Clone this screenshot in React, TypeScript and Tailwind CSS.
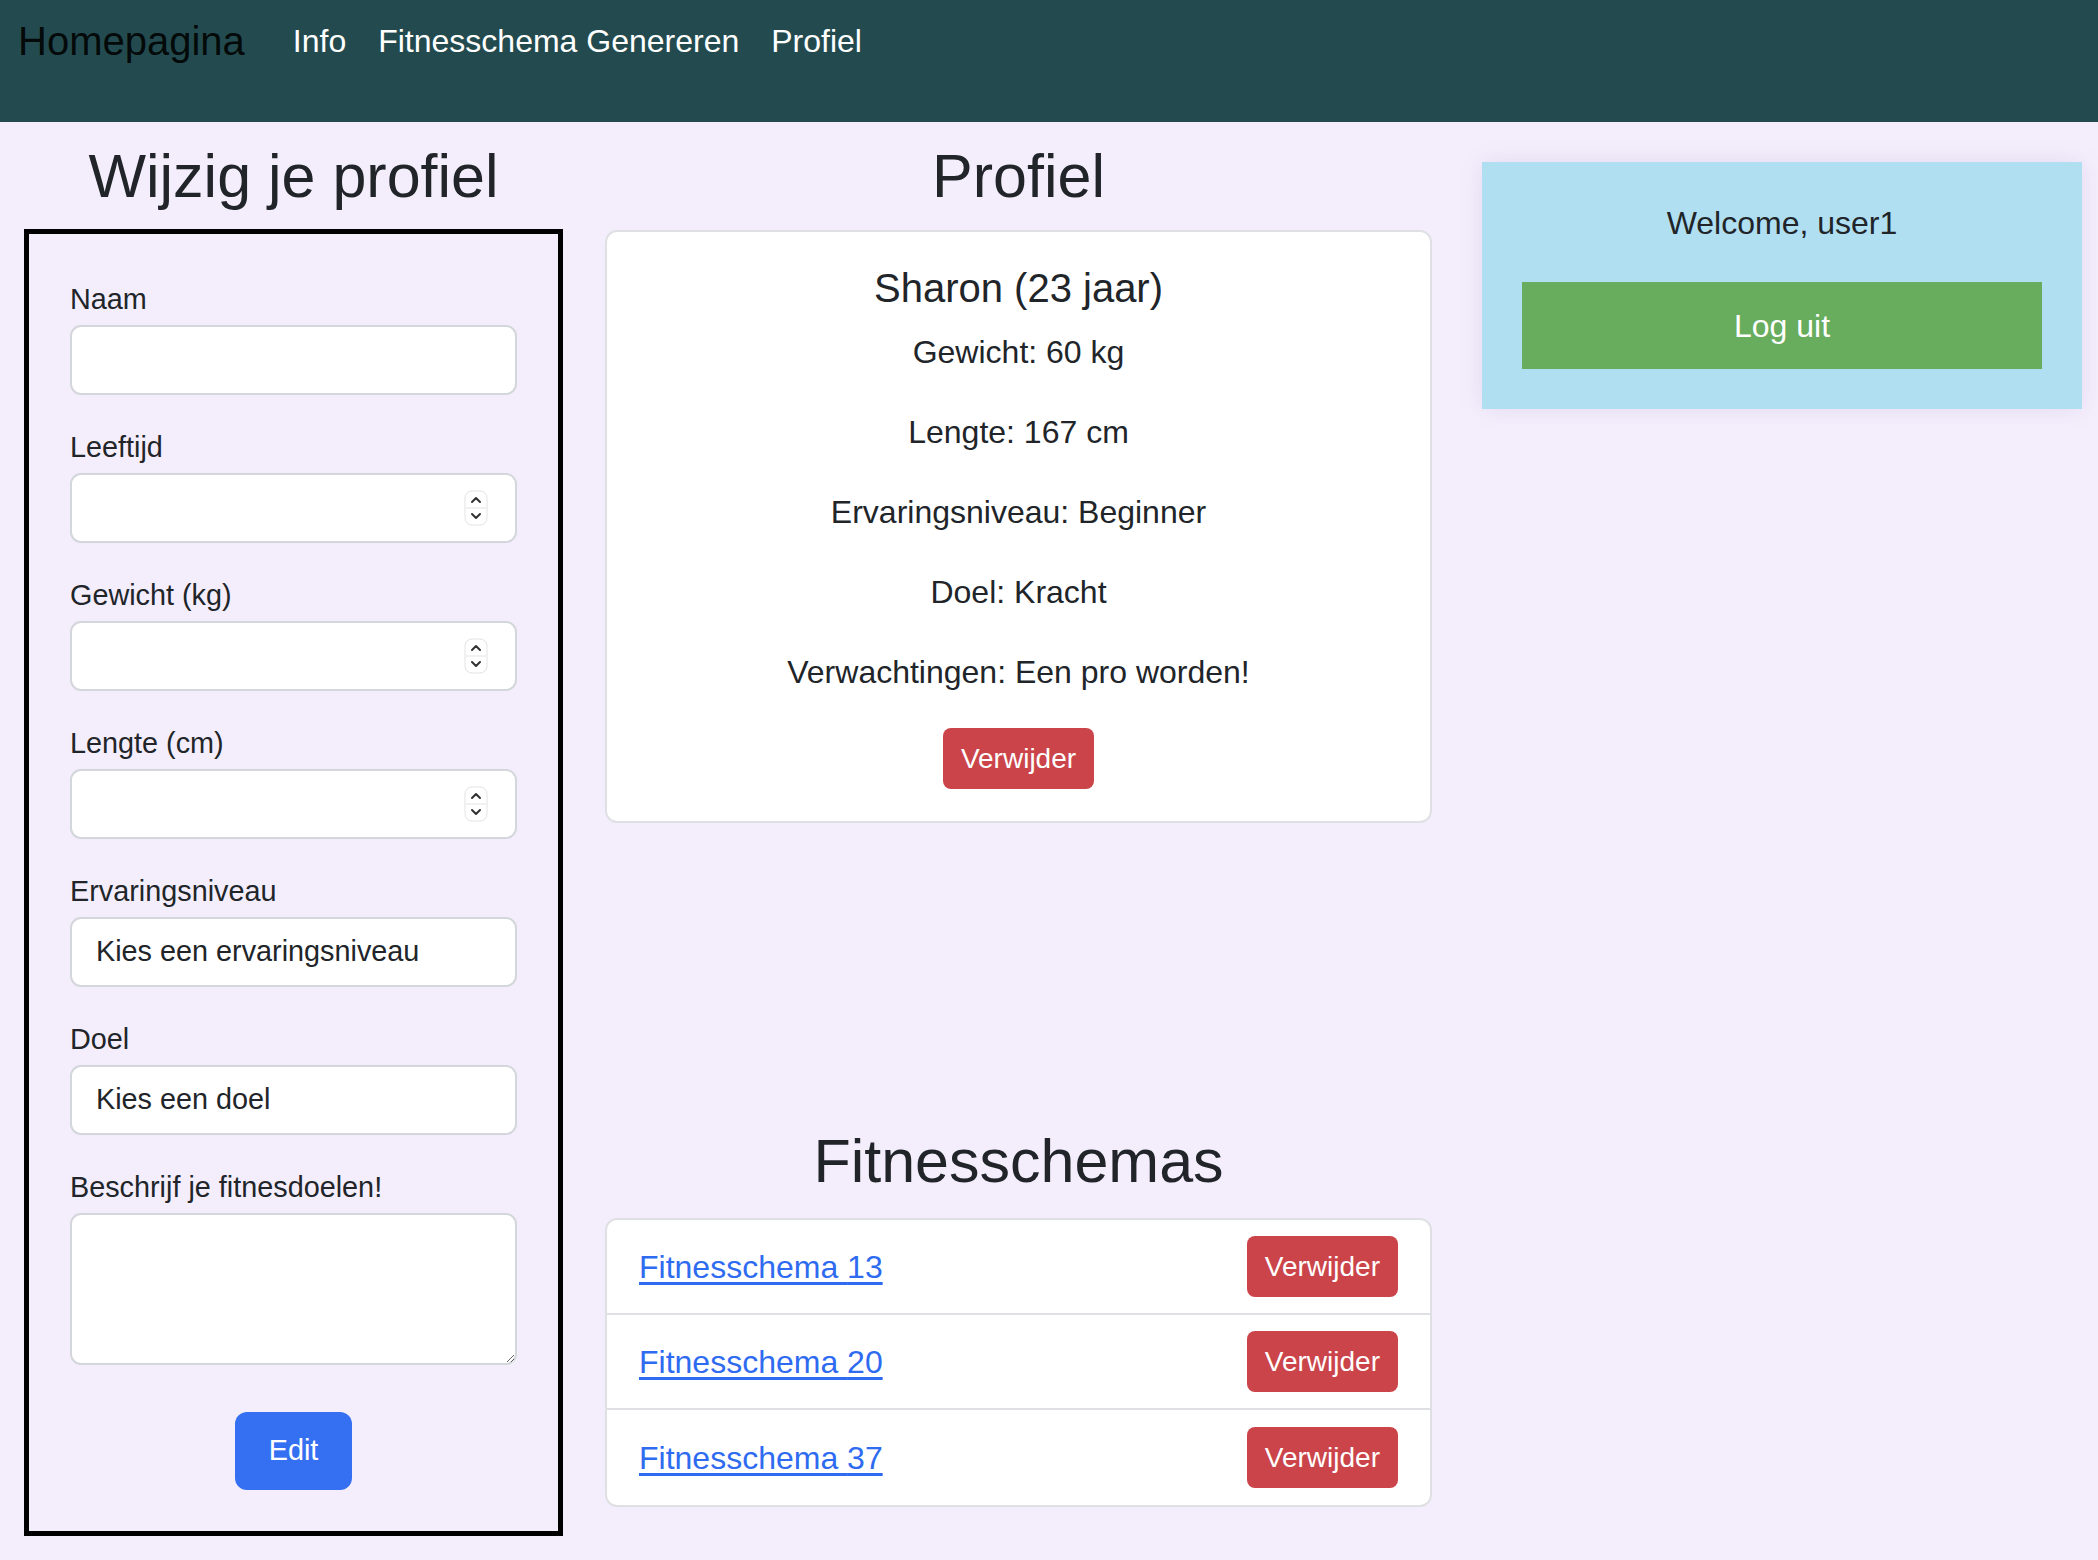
import { useState } from "react";

const font = { fontFamily: '"Liberation Sans", Arial, Helvetica, sans-serif' };

const labelCls = "block text-[28.8px] leading-[43px] mb-[4px] text-[#212529]";
const inputCls =
  "block w-full h-[70px] rounded-[11px] border-2 border-[#d3d6da] bg-white px-[24px] text-[28.8px] text-[#212529] outline-none";

// macOS-like number stepper, drawn since headless chrome hides it
const Stepper = () => (
  <svg
    width="24"
    height="36"
    viewBox="0 0 24 36"
    className="absolute right-[29px] top-1/2 -translate-y-1/2"
  >
    <rect x="1" y="1" width="22" height="34" rx="7" fill="#fff" stroke="#e3e3e6" />
    <line x1="2" y1="18" x2="22" y2="18" stroke="#e3e3e6" />
    <path d="M8 12 L12 8 L16 12" fill="none" stroke="#333" strokeWidth="2" strokeLinecap="round" strokeLinejoin="round" />
    <path d="M8 24 L12 28 L16 24" fill="none" stroke="#333" strokeWidth="2" strokeLinecap="round" strokeLinejoin="round" />
  </svg>
);

const NumberField = ({ label }: { label: string }) => (
  <div className="mb-[31px]">
    <label className={labelCls}>{label}</label>
    <div className="relative">
      <input type="text" className={inputCls} />
      <Stepper />
    </div>
  </div>
);

const DeleteButton = () => (
  <button className="h-[61px] px-[18px] rounded-[8px] bg-[#cb444a] text-white text-[28px] leading-none">
    Verwijder
  </button>
);

const schemas = [13, 20, 37];

const App = () => {
  const [naam, setNaam] = useState<string>("");

  return (
    <div className="min-h-screen w-full bg-[#f4eefc] text-[#212529]" style={font}>
      {/* Navbar */}
      <nav className="w-full h-[122px] bg-[#234b4f]">
        <div className="flex items-center h-[82px] pl-[18px]">
          <a href="#" className="text-[40px] text-black/90 mr-[32px]">
            Homepagina
          </a>
          {["Info", "Fitnesschema Genereren", "Profiel"].map((n) => (
            <a key={n} href="#" className="px-[16px] text-[32px] text-white">
              {n}
            </a>
          ))}
        </div>
      </nav>

      <div className="flex items-start pl-[24px]">
        {/* Edit form */}
        <div className="w-[539px] shrink-0">
          <h2 className="mt-[18px] mb-[16px] text-center text-[61px] leading-[73px] font-normal">
            Wijzig je profiel
          </h2>
          <form
            className="border-[5px] border-black px-[41px] pt-[44px] pb-[41px]"
            onSubmit={(e) => e.preventDefault()}
          >
            <div className="mb-[31px]">
              <label className={labelCls}>Naam</label>
              <input
                type="text"
                className={inputCls}
                value={naam}
                onChange={(e) => setNaam(e.target.value)}
              />
            </div>
            <NumberField label="Leeftijd" />
            <NumberField label="Gewicht (kg)" />
            <NumberField label="Lengte (cm)" />
            <div className="mb-[31px]">
              <label className={labelCls}>Ervaringsniveau</label>
              <select className={`${inputCls} appearance-none`}>
                <option>Kies een ervaringsniveau</option>
              </select>
            </div>
            <div className="mb-[31px]">
              <label className={labelCls}>Doel</label>
              <select className={`${inputCls} appearance-none`}>
                <option>Kies een doel</option>
              </select>
            </div>
            <div>
              <label className={labelCls}>Beschrijf je fitnesdoelen!</label>
              <textarea className="block w-full h-[152px] rounded-[11px] border-2 border-[#d3d6da] bg-white px-[24px] py-[12px] text-[28.8px] outline-none" />
            </div>
            <div className="flex justify-center mt-[47px]">
              <button className="w-[117px] h-[78px] rounded-[12px] bg-[#3570f2] text-white text-[28.8px]">
                Edit
              </button>
            </div>
          </form>
        </div>

        {/* Profile + schemas */}
        <div className="w-[827px] shrink-0 ml-[42px]">
          <h2 className="mt-[18px] mb-[17px] text-center text-[61px] leading-[73px] font-normal">
            Profiel
          </h2>
          <div className="border-2 border-[#dfe0e4] rounded-[12px] bg-white p-[32px] text-center">
            <h5 className="text-[40px] leading-[48px] mb-[16px]">Sharon (23 jaar)</h5>
            {[
              "Gewicht: 60 kg",
              "Lengte: 167 cm",
              "Ervaringsniveau: Beginner",
              "Doel: Kracht",
              "Verwachtingen: Een pro worden!",
            ].map((t) => (
              <p key={t} className="text-[32px] leading-[48px] mb-[32px]">
                {t}
              </p>
            ))}
            <DeleteButton />
          </div>

          <h2 className="mt-[302px] mb-[20px] text-center text-[61px] leading-[73px] font-normal">
            Fitnesschemas
          </h2>
          <div className="border-2 border-[#dfe0e4] rounded-[12px] bg-white overflow-hidden">
            {schemas.map((s, i) => (
              <div
                key={s}
                className={`flex items-center justify-between h-[95px] px-[32px] ${
                  i < schemas.length - 1 ? "border-b-2 border-[#dfe0e4]" : ""
                }`}
              >
                <a href="#" className="text-[32px] text-[#2f6bf0] underline underline-offset-[4px]">
                  Fitnesschema {s}
                </a>
                <DeleteButton />
              </div>
            ))}
          </div>
        </div>

        {/* Welcome */}
        <div className="w-[600px] shrink-0 ml-[50px] mt-[40px] bg-[#b0dff2] px-[40px] pt-[37px] pb-[40px] text-center shadow-[0_0_24px_rgba(80,60,140,0.10)]">
          <p className="text-[32px] leading-[48px] mb-[35px]">Welcome, user1</p>
          <button className="w-full h-[87px] bg-[#68ad5e] text-white text-[32px]">Log uit</button>
        </div>
      </div>
    </div>
  );
};

export default App;
